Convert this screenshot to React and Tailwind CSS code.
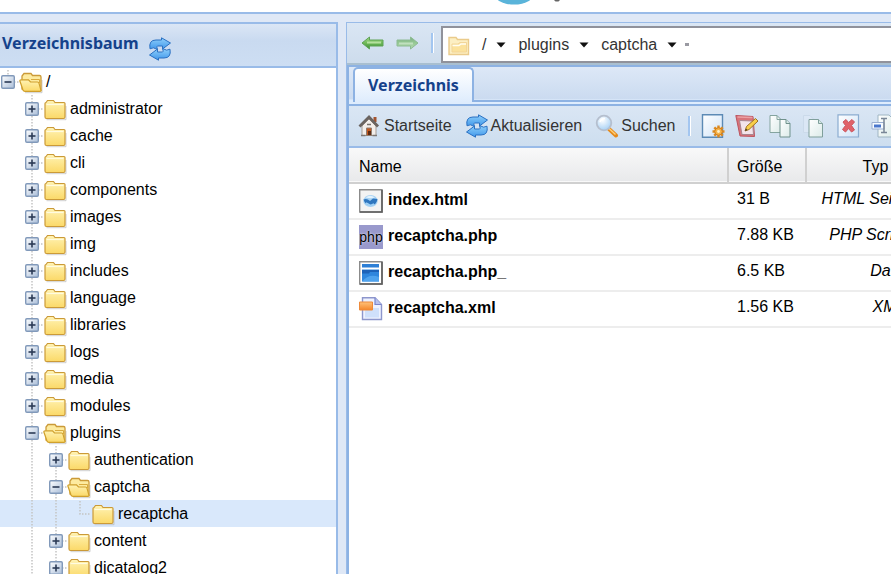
import { useState } from "react";

const tree = [
  { name: "/", level: 0, state: "open" },
  { name: "administrator", level: 1, state: "closed" },
  { name: "cache", level: 1, state: "closed" },
  { name: "cli", level: 1, state: "closed" },
  { name: "components", level: 1, state: "closed" },
  { name: "images", level: 1, state: "closed" },
  { name: "img", level: 1, state: "closed" },
  { name: "includes", level: 1, state: "closed" },
  { name: "language", level: 1, state: "closed" },
  { name: "libraries", level: 1, state: "closed" },
  { name: "logs", level: 1, state: "closed" },
  { name: "media", level: 1, state: "closed" },
  { name: "modules", level: 1, state: "closed" },
  { name: "plugins", level: 1, state: "open" },
  { name: "authentication", level: 2, state: "closed" },
  { name: "captcha", level: 2, state: "open" },
  { name: "recaptcha", level: 3, state: "leaf" },
  { name: "content", level: 2, state: "closed" },
  { name: "djcatalog2", level: 2, state: "closed" },
];

const Gradients = () => (
  <svg className="absolute h-0 w-0" aria-hidden="true">
    <defs>
      <linearGradient id="folder" x1="0" y1="0" x2="0" y2="1">
        <stop offset="0" stopColor="#fff3b4" />
        <stop offset="1" stopColor="#fbd968" />
      </linearGradient>
      <linearGradient id="toggle" x1="0" y1="0" x2="1" y2="1">
        <stop offset="0" stopColor="#ffffff" />
        <stop offset="1" stopColor="#a9bdd8" />
      </linearGradient>
      <linearGradient id="blue" x1="0" y1="0" x2="0" y2="1">
        <stop offset="0" stopColor="#8fd0fb" />
        <stop offset="1" stopColor="#3f96ea" />
      </linearGradient>
      <linearGradient id="green" x1="0" y1="0" x2="0" y2="1">
        <stop offset="0" stopColor="#a5d88c" />
        <stop offset="0.5" stopColor="#6fba58" />
        <stop offset="1" stopColor="#3b8a3a" />
      </linearGradient>
      <linearGradient id="paper" x1="0" y1="0" x2="1" y2="1">
        <stop offset="0" stopColor="#ffffff" />
        <stop offset="1" stopColor="#dcebe9" />
      </linearGradient>
      <linearGradient id="sheet" x1="0" y1="0" x2="1" y2="1">
        <stop offset="0" stopColor="#ffffff" />
        <stop offset="1" stopColor="#cfe3f8" />
      </linearGradient>
      <linearGradient id="orange" x1="0" y1="0" x2="0" y2="1">
        <stop offset="0" stopColor="#ffc27a" />
        <stop offset="1" stopColor="#f5862b" />
      </linearGradient>
      <radialGradient id="glass" cx="0.4" cy="0.3" r="0.8">
        <stop offset="0" stopColor="#ffffff" />
        <stop offset="1" stopColor="#9ccbf4" />
      </radialGradient>
    </defs>
  </svg>
);

const Icon = ({ children, className = "" }) => (
  <svg
    viewBox="0 0 24 24"
    className={`h-6 w-6 shrink-0 ${className}`}
    aria-hidden="true"
  >
    {children}
  </svg>
);

const FolderIcon = () => (
  <Icon>
    <path d="M3.5 22.7H23V9" fill="none" stroke="#b0b0b0" opacity="0.6" />
    <path
      d="M2 20V6.5Q2 5.5 3 5.5L4.5 3.5H10.5L12 5.5H21Q22 5.5 22 6.5V20Q22 21.5 20.5 21.5H3.5Q2 21.5 2 20Z"
      fill="url(#folder)"
      stroke="#cb9a38"
      strokeWidth="1.2"
    />
    <path d="M3.5 7.5H20.5" stroke="#fffbe0" strokeWidth="1.2" />
  </Icon>
);

const FolderOpenIcon = () => (
  <Icon>
    <path d="M6 22.7H23V10" fill="none" stroke="#b0b0b0" opacity="0.6" />
    <path
      d="M3 19V6L5 3.5H12L13.5 5.5H20.5Q22 5.5 22 7V20.5H6Z"
      fill="#fdebA0"
      stroke="#cb9a38"
      strokeWidth="1.3"
    />
    <path
      d="M0.8 10.8Q0.8 9.8 2 9.8H9.5L11.5 12H18.5Q19.5 12 20 13.2L22 20.5Q22 21.3 21 21.3H6Q4.5 21.3 4 20Z"
      fill="url(#folder)"
      stroke="#d0a02c"
      strokeWidth="1.2"
    />
    <path d="M20.5 13V9.5H12" fill="none" stroke="#d9ab3e" />
  </Icon>
);

const RefreshIcon = () => (
  <Icon>
    <path
      d="M2 11.8Q0.500 3 8 3H13.500V0.800L22.500 6L14.500 12V9H9.500Q8 9 9.500 12.500Q5 9.500 2 11.800Z"
      fill="url(#blue)"
      stroke="#2a70c2"
    />
    <path
      d="M22 12.200Q23.500 21 16 21H10.500V23.200L1.500 18L9.500 12V15H14.500Q16 15 14.500 11.500Q19 14.500 22 12.200Z"
      fill="url(#blue)"
      stroke="#2a70c2"
    />
  </Icon>
);

const ArrowIcon = ({ className }) => (
  <Icon className={className}>
    <path
      d="M1 12L8.5 6V9H22V15H8.5V18Z"
      fill="url(#green)"
      stroke="#5ea355"
      strokeLinejoin="round"
    />
    <path d="M6 11.5H20" stroke="#b5e09f" strokeWidth="2" />
  </Icon>
);

const HomeIcon = () => (
  <Icon>
    <path d="M15.5 3H18.5V8H15.5Z" fill="#a3532f" />
    <path d="M4 12L11 5L18 12V21.5H4Z" fill="#f3eeea" stroke="#a59b93" />
    <path
      d="M1.5 12.500L11 3L20 12.500"
      fill="none"
      stroke="#6b6460"
      strokeWidth="2.800"
    />
    <path d="M8.500 14H13.500V21.500H8.500Z" fill="#c4571c" stroke="#8f7d70" />
    <path d="M10 17H13V21H10Z" fill="#5e2b12" />
    <path d="M9 10.500H13" stroke="#77706b" strokeWidth="1.500" />
    <path d="M3 21.500H7.500M14.500 21.500H19" stroke="#7c7774" strokeWidth="1.600" />
  </Icon>
);

const SearchIcon = () => (
  <Icon>
    <path d="M14 15L21 21.5" stroke="#e58a1c" strokeWidth="4" strokeLinecap="round" />
    <path d="M14 14.5L20.5 20.5" stroke="#ffd079" strokeWidth="1.4" />
    <circle cx="9" cy="9" r="7.3" fill="url(#glass)" stroke="#b5bfce" strokeWidth="1.8" />
    <path d="M5 8Q6 4.5 10 4.5" fill="none" stroke="#fff" strokeWidth="1.6" />
  </Icon>
);

const NewFileIcon = () => (
  <Icon>
    <path d="M1.5 0.8H21.5V23.2H1.5Z" fill="url(#sheet)" stroke="#5c8ab5" strokeWidth="1.4" />
    <path
      d="M17.5 11.5V23.5M11.5 17.5H23.5M13.3 13.3L21.7 21.7M21.7 13.3L13.3 21.7"
      stroke="#dd8a20"
      strokeWidth="2.4"
    />
    <circle cx="17.5" cy="17.5" r="3.8" fill="#f5b34a" stroke="#d27d18" />
    <circle cx="17.5" cy="17.5" r="1.4" fill="#fff0c9" />
  </Icon>
);

const EditIcon = () => (
  <Icon>
    <path d="M0.8 1.5L18 2.5L19.5 22.5L5 22Z" fill="#d8747a" stroke="#bb5560" />
    <path d="M4.5 6.5L17.5 7L18.5 20.5L7 20.5Z" fill="#f3e4ea" stroke="#a88690" />
    <path d="M2.5 3L17.5 3.5" stroke="#eca0a4" strokeWidth="1.5" />
    <path d="M10 17L11.5 12.5L20.5 4.5L23 7L14 15.5Z" fill="#f9cf4a" stroke="#9c7124" />
    <path d="M10 17L11 14.5L12.5 16Z" fill="#4b3a26" />
  </Icon>
);

const CopyIcon = () => (
  <Icon>
    <path d="M1 1.5H8L12 5.5V18.5H1Z" fill="url(#paper)" stroke="#84a49f" />
    <path d="M8 1.5V5.5H12" fill="none" stroke="#84a49f" />
    <path d="M11 5.5H17L21 9.5V23H11Z" fill="url(#paper)" stroke="#6f918c" />
    <path d="M17 5.5V9.5H21" fill="#d5e7e4" stroke="#6f918c" />
  </Icon>
);

const MoveIcon = () => (
  <Icon>
    <path d="M0.5 1.5H7L10 4.5V18.5H0.5Z" fill="#dbe7f5" stroke="#cbdaea" />
    <path d="M6 5.5H15.5L19.5 9.5V23H6Z" fill="url(#paper)" stroke="#7f9f9b" />
    <path d="M15.5 5.5V9.5H19.5" fill="#d5e7e4" stroke="#7f9f9b" />
  </Icon>
);

const DeleteIcon = () => (
  <Icon>
    <path d="M1 0.8H21.5V23H1Z" fill="url(#sheet)" stroke="#8bacd0" strokeWidth="1.2" />
    <path
      d="M6 8L9 5.5L11.5 8.5L15 5.5L17.5 8L14.5 11.5L17.5 16L14.5 18L11.5 14.5L8.5 18L5.5 15.5L8.5 11.5Z"
      fill="#e0626a"
      stroke="#cc5760"
    />
  </Icon>
);

const RenameIcon = () => (
  <Icon>
    <path d="M7 1H18L22 5V23H7Z" fill="url(#paper)" stroke="#9fb5c2" />
    <path d="M1 8.5H13V15H1Z" fill="#f6fbff" stroke="#9aaed0" />
    <path d="M3 10.5H10V13.5H3Z" fill="#4a76cc" />
    <path d="M10 4.5H16M13 4.5V18.5M10 18.5H16" fill="none" stroke="#7a8797" strokeWidth="1.5" />
  </Icon>
);

const PathFolderIcon = () => (
  <Icon>
    <path d="M2 4.5H9L10.5 6.5H21.500V21.500H2Z" fill="#fcefc3" stroke="#eacb8b" strokeWidth="1.400" />
    <path d="M5 19V11H11L13 9.500H19.500V19Z" fill="#fbe29c" stroke="#f2d598" />
    <path d="M5.500 12.500H12L14 11H19" fill="none" stroke="#fffdf2" strokeWidth="1.500" />
  </Icon>
);

const HtmlIcon = () => (
  <Icon>
    <path d="M0.7 0.7H23V23H0.7Z" fill="#f3f3f3" stroke="#8b8b8b" strokeWidth="1.4" />
    <path d="M23 1V23H1" fill="none" stroke="#5e5e5e" strokeWidth="1.6" />
    <ellipse cx="11.5" cy="12" rx="7.2" ry="6" fill="#a5d1f3" />
    <path d="M4.5 10.5Q8 9 11 12L14 9.5L18.5 10Q18 15.500 12 16.500Q6 16 4.500 10.500Z" fill="#2f76bf" />
    <path d="M6.500 8.500Q11 5 16 8.500Q12 10 6.500 8.500Z" fill="#e2f2fd" />
    <path d="M7 14L11.500 16.500L15 15" fill="none" stroke="#9fd0f5" strokeWidth="1.600" />
  </Icon>
);

const PhpIcon = () => (
  <span className="flex h-6 w-6 shrink-0 items-center justify-center bg-[#9999cc] text-[14px] leading-6 font-normal text-black [text-shadow:0_0_2px_#fff]">
    php
  </span>
);

const WindowIcon = () => (
  <Icon>
    <path d="M0.7 0.7H23V23H0.7Z" fill="#fff" stroke="#8b8b8b" strokeWidth="1.4" />
    <path d="M23 1V23H1" fill="none" stroke="#5e5e5e" strokeWidth="1.6" />
    <path d="M3 3H20V6.5H3Z" fill="#2d7fd6" />
    <path d="M3 8.5H20V20.5H3Z" fill="#2f86dd" />
    <path d="M3 9H20V11H11L10 12.5H3Z" fill="#1d62b8" />
    <path d="M3 20.5Q10 12 20 16V20.5Z" fill="#4fa3ee" />
  </Icon>
);

const XmlIcon = () => (
  <Icon>
    <path d="M3.5 0.8H16L22.5 7.5V22.5H3.5Z" fill="#eef2ff" stroke="#8d96cc" strokeWidth="1.4" />
    <path d="M8 11H20V20.5H6V14Z" fill="#cfe0fb" />
    <path d="M16 0.8V7.5H22.5" fill="#b8c2ee" stroke="#7b85cc" strokeWidth="1.2" />
    <path d="M0.5 5H13.5V13H0.5Z" fill="url(#orange)" stroke="#ee8a3a" />
  </Icon>
);

const Caret = ({ label }) => (
  <button type="button" aria-label={label} className="flex w-[10px] justify-center">
    <svg viewBox="0 0 10 6" className="h-[6px] w-[10px]" aria-hidden="true">
      <path d="M0.5 0.5H9.5L5 5.5Z" fill="#111" />
    </svg>
  </button>
);

const Guide = ({ cut }) => (
  <svg className="h-[27px] w-6 shrink-0" viewBox="0 0 24 27" aria-hidden="true">
    {!cut && (
      <path d="M8 0V27" stroke="#c4c4c4" strokeWidth="1.5" strokeDasharray="1.5 1.5" />
    )}
  </svg>
);

const Toggle = ({ item }) => (
  <svg className="h-[27px] w-[19px] shrink-0" viewBox="0 0 19 27" aria-hidden="true">
    <path
      d={
        item.state === "leaf"
          ? "M8 1V14H19"
          : item.level === 0
            ? "M8 2V14H19"
            : "M8 0V27M8 14H19"
      }
      fill="none"
      stroke="#c4c4c4"
      strokeWidth="1.5"
      strokeDasharray="1.5 1.5"
    />
    {item.state !== "leaf" && (
      <>
        <rect x="1.7" y="7.700" width="12.600" height="12.600" rx="1.200" fill="url(#toggle)" stroke="#8199ba" strokeWidth="1.400" />
        <path d="M4.500 14H11.500" stroke="#2b3a55" strokeWidth="1.600" />
        {item.state === "closed" && (
          <path d="M8 10.500V17.500" stroke="#2b3a55" strokeWidth="1.600" />
        )}
      </>
    )}
  </svg>
);

const TreeRow = ({ item, selected, onSelect }) => (
  <li className={`flex h-[27px] items-center ${selected ? "bg-[#d9e8fb]" : ""}`}>
    {Array.from({ length: item.level }, (_, i) => (
      <Guide key={i} cut={i === 0} />
    ))}
    {item.state === "leaf" ? (
      <Toggle item={item} />
    ) : (
      <button type="button" aria-label={`${item.name} umschalten`}>
        <Toggle item={item} />
      </button>
    )}
    {item.state === "open" ? <FolderOpenIcon /> : <FolderIcon />}
    <a href="#" onClick={() => onSelect(item.name)} className="pl-[3px] leading-6">
      {item.name}
    </a>
  </li>
);

const ToolButton = ({ icon, children, label }) => (
  <button type="button" aria-label={label} className="flex shrink-0 items-center gap-[2px]">
    {icon}
    {children}
  </button>
);

const Separator = () => (
  <span className="h-5 w-[3px] shrink-0 border-r border-l-2 border-r-white border-l-[#a3c6f0]" />
);

const files = [
  { name: "index.html", size: "31 B", type: "HTML Seiten Datei", icon: <HtmlIcon /> },
  { name: "recaptcha.php", size: "7.88 KB", type: "PHP Script Datei", icon: <PhpIcon /> },
  { name: "recaptcha.php_", size: "6.5 KB", type: "Datei", icon: <WindowIcon /> },
  { name: "recaptcha.xml", size: "1.56 KB", type: "XML", icon: <XmlIcon /> },
];

const FileTable = () => (
  <table className="w-[623px] table-fixed border-collapse text-left">
    <colgroup>
      <col className="w-[379px]" />
      <col className="w-[78px]" />
      <col className="w-[166px]" />
    </colgroup>
    <thead>
      <tr className="h-[35px] border-b-2 border-[#d0d0d0] bg-linear-to-b from-[#f9f9f9] to-[#e8e9eb]">
        <th className="border-r-2 border-[#d0d0d0] pt-1 pl-[10px] font-normal">Name</th>
        <th className="border-r-2 border-[#d0d0d0] pt-1 pl-2 font-normal">Größe</th>
        <th className="pt-1 pr-7 text-center font-normal">Typ</th>
      </tr>
    </thead>
    <tbody>
      {files.map((file) => (
        <tr key={file.name} className="h-9 border-b-2 border-[#ededed] align-top">
          <td className="pt-[5px] pl-[10px]">
            <div className="flex items-start gap-[5px] font-bold">
              {file.icon}
              <span className="leading-[22px]">{file.name}</span>
            </div>
          </td>
          <td className="pt-1 pl-[9px] leading-[22px]">{file.size}</td>
          <td className="pt-1 text-center leading-[22px] whitespace-nowrap italic">
            {file.type}
          </td>
        </tr>
      ))}
    </tbody>
  </table>
);

const App = () => {
  const [selected, setSelected] = useState("recaptcha");

  return (
    <div className="flex h-screen flex-col overflow-hidden bg-white font-['Liberation_Sans',Arial,sans-serif] text-[16px] text-black">
      <Gradients />
      <header className="flex h-3 shrink-0 justify-center">
        <svg viewBox="0 0 240 5" className="h-[5px] w-60" aria-hidden="true">
          <ellipse cx="188" cy="-8" rx="21" ry="12.600" fill="#5ab4da" />
          <path d="M228 0H234L232.500 1.500H229.500Z" fill="#666" />
        </svg>
      </header>

      <div className="flex min-h-0 flex-1 border-t-2 border-[#99bbe8] bg-[#dfe8f6] pt-2">
        <aside className="flex w-[338px] shrink-0 flex-col overflow-hidden border-t-2 border-r-2 border-[#99bbe8] bg-white">
          <div className="flex h-11 shrink-0 items-end gap-[9px] border-b-2 border-[#99bbe8] bg-linear-to-b from-[#dbe6f5] from-0% via-[#c9daf0] via-40% to-[#cddef3] pb-[5px] pl-[2px]">
            <h2 className="font-['Noto_Sans',sans-serif] text-[16px] leading-9 font-bold text-[#15428b]">
              Verzeichnisbaum
            </h2>
            <button type="button" aria-label="Baum aktualisieren">
              <RefreshIcon />
            </button>
          </div>
          <ul>
            {tree.map((item) => (
              <TreeRow
                key={item.name}
                item={item}
                selected={item.name === selected}
                onSelect={setSelected}
              />
            ))}
          </ul>
        </aside>

        <main className="ml-2 flex min-w-0 flex-1 flex-col overflow-hidden border-t border-l border-[#99bbe8]">
          <nav className="flex h-[42px] shrink-0 items-center border-b-2 border-[#a9bfd0] bg-linear-to-b from-[#dae6f4] to-[#cddcec] pl-[14px] text-[#333]">
            <button type="button" aria-label="Zurück">
              <ArrowIcon />
            </button>
            <button type="button" aria-label="Vorwärts" className="ml-[10px]">
              <ArrowIcon className="rotate-180 opacity-60" />
            </button>
            <span className="ml-3 flex">
              <Separator />
            </span>
            <div className="ml-[7px] flex h-[37px] flex-1 items-center self-end border-2 border-r-0 border-[#90929b] bg-white pl-1">
              <PathFolderIcon />
              <a href="#" className="mr-[10px] ml-[11px]">
                /
              </a>
              <Caret label="Ordner in /" />
              <a href="#" className="mr-[10px] ml-3">
                plugins
              </a>
              <Caret label="Ordner in plugins" />
              <a href="#" className="mr-[10px] ml-3">
                captcha
              </a>
              <Caret label="Ordner in captcha" />
              <span className="ml-2 h-[3px] w-1 bg-[#9a9aa2]" />
            </div>
          </nav>

          <section className="flex min-h-0 flex-1 flex-col border-t-2 border-l-2 border-[#8db2e3] bg-white">
            <div className="flex h-[39px] shrink-0 items-start border-b-2 border-[#8db2e3] bg-linear-to-b from-[#dde8f7] from-0% via-[#cbdbf0] via-85% to-[#deecfd] to-90%">
              <div className="flex h-[37px] w-full border-b-2 border-[#deecfd] pl-1">
                <div className="h-[35px] rounded-t-[5px] border-2 border-b-0 border-[#8db2e3] bg-linear-to-b from-white to-[#deecfd] px-[13px] pt-px">
                  <a
                    href="#"
                    className="block font-['Noto_Sans',sans-serif] text-[16px] leading-[30px] font-bold text-[#15428b]"
                  >
                    Verzeichnis
                  </a>
                </div>
                <span className="mt-[33px] h-[2px] flex-1 bg-[#8db2e3]" />
              </div>
            </div>

            <div className="flex h-[42px] shrink-0 items-center overflow-hidden border-b-2 border-[#99bbe8] bg-linear-to-b from-[#dae6f4] to-[#cddeef] pl-[9px] text-[#333]">
              <div className="flex gap-[13px]">
                <ToolButton icon={<HomeIcon />}>Startseite</ToolButton>
                <ToolButton icon={<RefreshIcon />}>Aktualisieren</ToolButton>
                <ToolButton icon={<SearchIcon />}>Suchen</ToolButton>
              </div>
              <span className="mr-[10px] ml-[13px] flex">
                <Separator />
              </span>
              <div className="flex gap-[10px]">
                <ToolButton label="Neue Datei" icon={<NewFileIcon />} />
                <ToolButton label="Bearbeiten" icon={<EditIcon />} />
                <ToolButton label="Kopieren" icon={<CopyIcon />} />
                <ToolButton label="Verschieben" icon={<MoveIcon />} />
                <ToolButton label="Löschen" icon={<DeleteIcon />} />
                <ToolButton label="Umbenennen" icon={<RenameIcon />} />
              </div>
            </div>

            <div className="min-h-0 flex-1 overflow-hidden">
              <FileTable />
            </div>
          </section>
        </main>
      </div>
    </div>
  );
};

export default App;
